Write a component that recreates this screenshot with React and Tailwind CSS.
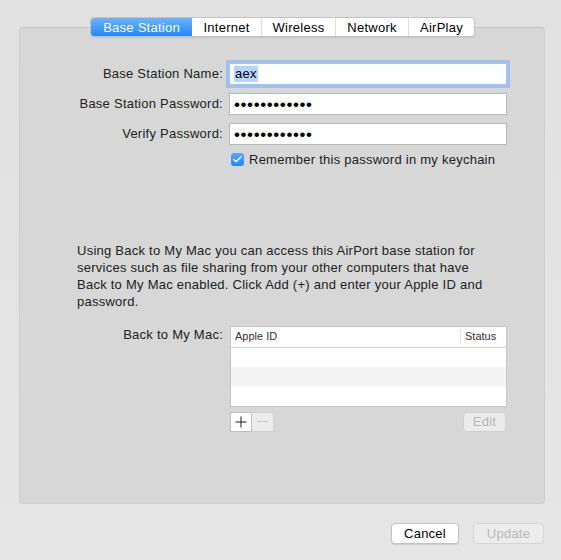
import { Check } from 'lucide-react';

const font = { fontFamily: '"Liberation Sans", Arial, sans-serif' };

function Tabs() {
  const tabs = [
    { name: 'Base Station', w: 'w-[101px]', active: true },
    { name: 'Internet', w: 'w-[69px]' },
    { name: 'Wireless', w: 'w-[74px]' },
    { name: 'Network', w: 'w-[73px]' },
    { name: 'AirPlay', w: 'w-[66px]' },
  ];
  return (
    <div className="relative z-10 flex justify-start pl-[90px] pt-[17px]">
      <div className="flex h-[20px] rounded-[4px] border border-[#c3c3c3] bg-white shadow-[0_1px_1px_rgba(0,0,0,0.08)] overflow-hidden">
        {tabs.map((t, i) => (
          <div
            key={t.name}
            className={`${t.w} flex items-center justify-center text-[13px] leading-none ${
              t.active
                ? 'bg-gradient-to-b from-[#6cb3fa] to-[#1a86fe] text-white'
                : 'text-black'
            } ${i > 0 && !tabs[i - 1].active ? 'border-l border-[#dcdcdc]' : ''}`}
          >
            {t.name}
          </div>
        ))}
      </div>
    </div>
  );
}

function Field({ children, focused }) {
  return (
    <div
      className={`h-[22px] w-[278px] bg-white flex items-center px-[4px] ${
        focused
          ? 'border border-[#a7c3e7] shadow-[0_0_0_3px_#9dc0ee]'
          : 'border border-[#b9b9b9]'
      }`}
    >
      {children}
    </div>
  );
}

const Dots = () => (
  <span className="text-[17px] leading-none tracking-[0.6px] text-black">••••••••••••</span>
);

export default function App() {
  return (
    <div style={font} className="w-[561px] h-[560px] bg-gradient-to-b from-[#e1e1e1] to-[#e6e6e6] text-[13px] tracking-[0.25px] text-[#222] flex flex-col">
      <Tabs />

      {/* Panel */}
      <div className="ml-[19px] mr-[16px] -mt-[10px] h-[477px] rounded-[4px] bg-[#d7d7d7] border border-[#cdcdcd] border-t-[#c2c2c2] flex flex-col">
        <div className="grid grid-cols-[203px_278px] gap-x-[6px] gap-y-[8px] pt-[35px] items-center">
          <div className="text-right">Base Station Name:</div>
          <Field focused>
            <span className="bg-[#b4d5fe] text-black leading-[16px] px-[1px]">aex</span>
          </Field>

          <div className="text-right">Base Station Password:</div>
          <Field>
            <Dots />
          </Field>

          <div className="text-right">Verify Password:</div>
          <Field>
            <Dots />
          </Field>

          <div />
          <div className="-mt-[3px] flex items-center gap-[5px] pl-[2px]">
            <div className="w-[13px] h-[13px] rounded-[3px] bg-gradient-to-b from-[#58a8fc] to-[#1b85fe] flex items-center justify-center">
              <Check className="w-[11px] h-[11px] text-white" strokeWidth={3} />
            </div>
            <span>Remember this password in my keychain</span>
          </div>
        </div>

        <p className="mt-[72px] ml-[57px] w-[414px] leading-[17px] text-[#222]">
          Using Back to My Mac you can access this AirPort base station for services such as file
          sharing from your other computers that have Back to My Mac enabled. Click Add (+) and
          enter your Apple ID and password.
        </p>

        <div className="mt-[16px] grid grid-cols-[203px_277px] gap-x-[7px]">
          <div className="text-right leading-[17px]">Back to My Mac:</div>
          <div>
            <div className="h-[81px] border border-[#c4c4c4] bg-white flex flex-col">
              <div className="h-[21px] flex items-center border-b border-[#d6d6d6] text-[11px] tracking-normal text-[#333]">
                <div className="flex-1 pl-[4px]">Apple ID</div>
                <div className="h-[15px] border-l border-[#e0e0e0] w-[46px] pl-[4px] flex items-center">Status</div>
              </div>
              <div className="h-[19px] bg-white" />
              <div className="h-[19px] bg-[#f4f4f4]" />
              <div className="h-[19px] bg-white" />
            </div>
            <div className="mt-[5px] flex items-center justify-between">
              <div className="flex h-[20px]">
                <div className="w-[22px] border border-[#bdbdbd] bg-white flex items-center justify-center">
                  <svg width="12" height="12" viewBox="0 0 12 12">
                    <path d="M6 0.5V11.5M0.5 6H11.5" stroke="#1a1a1a" strokeWidth="1" />
                  </svg>
                </div>
                <div className="w-[22px] border border-l-0 border-[#cfcfcf] bg-[#ececec] flex items-center justify-center">
                  <div className="w-[11px] h-px bg-[#c5c5c5]" />
                </div>
              </div>
              <div className="w-[43px] h-[20px] mr-[1px] rounded-[4px] border border-[#d0d0d0] bg-[#ececec] text-[#b5b5b5] flex items-center justify-center">Edit</div>
            </div>
          </div>
        </div>
      </div>

      {/* Buttons */}
      <div className="flex justify-end gap-[14px] pr-[17px] pt-[19px]">
        <div className="w-[68px] h-[21px] rounded-[4px] border border-[#c2c2c2] bg-white shadow-[0_1px_1px_rgba(0,0,0,0.1)] flex items-center justify-center text-black">Cancel</div>
        <div className="w-[71px] h-[21px] rounded-[4px] border border-[#d5d5d5] bg-[#ececec] flex items-center justify-center text-[#b8b8b8]">Update</div>
      </div>
    </div>
  );
}
